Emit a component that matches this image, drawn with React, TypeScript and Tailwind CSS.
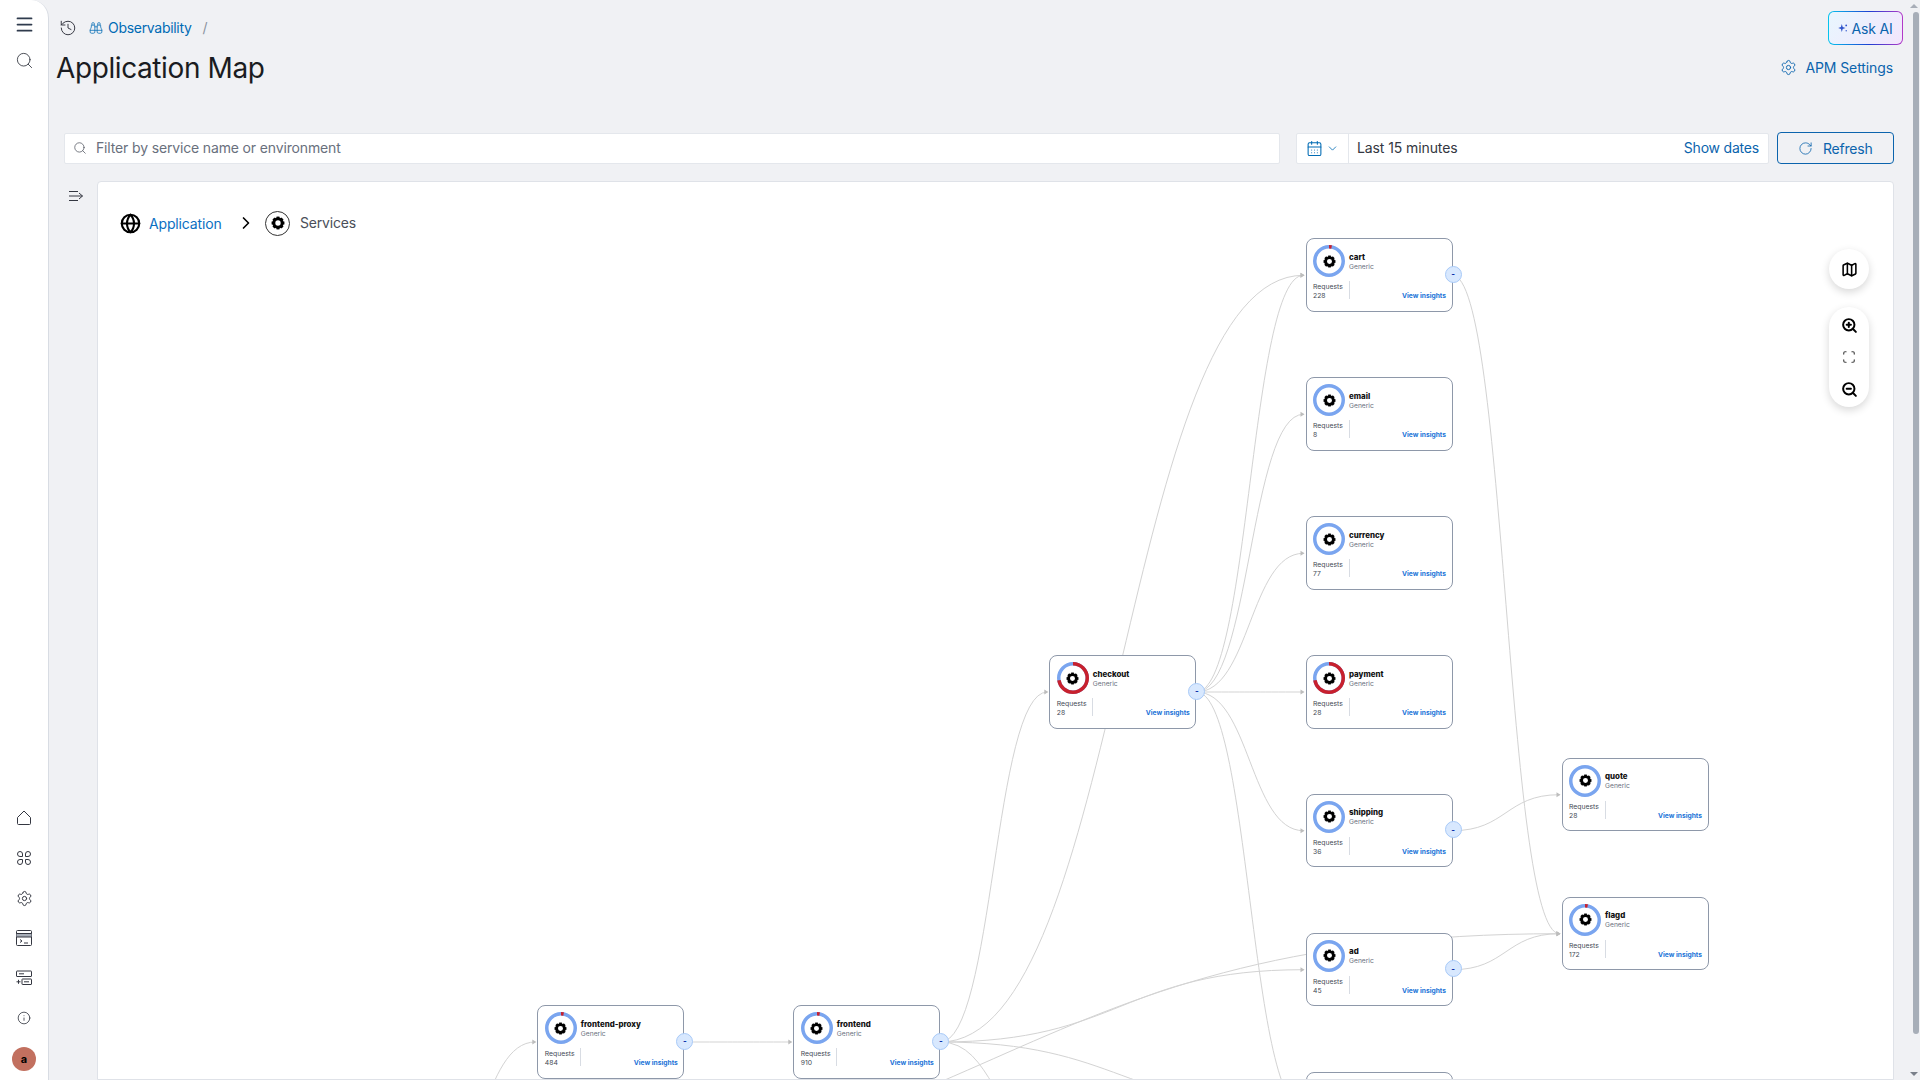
import { Binoculars, CalendarDays, ChevronDown, ChevronRight, Globe, History, Info, Map as MapIcon, Menu, RotateCw, Scan, Search, Settings, ZoomIn, ZoomOut } from "lucide-react";

const OX = 98;
const OY = 181.5;
const NODE_W = 147;
const NODE_H = 73;
const COLS = [537.3, 793.3, 1049.3, 1305.5, 1561.5];
const Y = { cart: 238.3, email: 377.3, currency: 516.3, pay: 655, ship: 793.7, ad: 932.7, last: 1071.7, quote: 757.7, flagd: 896.7, front: 1005 };

type NodeData = {
  name: string;
  requests: string;
  x: number;
  y: number;
  red: number;
  handle?: boolean;
};

const NODES: NodeData[] = [
  { name: "cart", requests: "228", x: COLS[3], y: Y.cart, red: 0.03, handle: true },
  { name: "email", requests: "8", x: COLS[3], y: Y.email, red: 0 },
  { name: "currency", requests: "77", x: COLS[3], y: Y.currency, red: 0 },
  { name: "payment", requests: "28", x: COLS[3], y: Y.pay, red: 0.72 },
  { name: "shipping", requests: "36", x: COLS[3], y: Y.ship, red: 0, handle: true },
  { name: "ad", requests: "45", x: COLS[3], y: Y.ad, red: 0, handle: true },
  { name: "", requests: "", x: COLS[3], y: Y.last, red: 0 },
  { name: "checkout", requests: "28", x: COLS[2], y: Y.pay, red: 0.72, handle: true },
  { name: "quote", requests: "28", x: COLS[4], y: Y.quote, red: 0 },
  { name: "flagd", requests: "172", x: COLS[4], y: Y.flagd, red: 0.03 },
  { name: "frontend-proxy", requests: "484", x: COLS[0], y: Y.front, red: 0.03, handle: true },
  { name: "frontend", requests: "910", x: COLS[1], y: Y.front, red: 0.03, handle: true },
];

const src = (n: number, y: number) => [COLS[n] + NODE_W, y + NODE_H / 2];
const dst = (n: number, y: number) => [COLS[n] - 2, y + NODE_H / 2];

const EDGES: number[][][] = [
  [[428, 1183], dst(0, Y.front)],
  [[428, 1183], dst(4, Y.flagd)],
  [src(0, Y.front), dst(1, Y.front)],
  [src(1, Y.front), dst(2, Y.pay)],
  [src(1, Y.front), dst(3, Y.cart)],
  [src(1, Y.front), dst(3, Y.ad)],
  [src(1, Y.front), dst(3, Y.last)],
  [src(1, Y.front), [1047, 1129]],
  [src(2, Y.pay), dst(3, Y.cart)],
  [src(2, Y.pay), dst(3, Y.email)],
  [src(2, Y.pay), dst(3, Y.currency)],
  [src(2, Y.pay), dst(3, Y.pay)],
  [src(2, Y.pay), dst(3, Y.ship)],
  [src(2, Y.pay), dst(3, Y.last)],
  [src(3, Y.cart), dst(4, Y.flagd)],
  [src(3, Y.ship), dst(4, Y.quote)],
  [src(3, Y.ad), dst(4, Y.flagd)],
];

function edgePath(a: number[], b: number[]) {
  const [x0, y0] = [a[0] - OX, a[1] - OY];
  const [x1, y1] = [b[0] - OX, b[1] - OY];
  const mx = (x0 + x1) / 2;
  return `M${x0},${y0} C${mx},${y0} ${mx},${y1} ${x1},${y1}`;
}

function Gear({ size }: { size: number }) {
  const teeth = [0, 45, 90, 135, 180, 225, 270, 315];
  return (
    <svg width={size} height={size} viewBox="0 0 24 24">
      {teeth.map((a) => (
        <rect key={a} x="9.5" y="1" width="5" height="5" fill="#000" transform={`rotate(${a} 12 12)`} />
      ))}
      <circle cx="12" cy="12" r="7.2" fill="none" stroke="#000" strokeWidth="5.2" />
    </svg>
  );
}

function Ring({ red }: { red: number }) {
  const r = 14.25;
  const c = 2 * Math.PI * r;
  return (
    <div className="relative w-8 h-8 shrink-0 flex items-center justify-center">
      <svg width="32" height="32" viewBox="0 0 32 32" className="absolute inset-0 -rotate-90">
        <circle cx="16" cy="16" r={r} fill="none" stroke="#7aa5ef" strokeWidth="3.5" />
        {red > 0 && (
          <circle cx="16" cy="16" r={r} fill="none" stroke="#c8202d" strokeWidth="3.5" strokeDasharray={`${red * c} ${c}`} />
        )}
      </svg>
      <Gear size={13} />
    </div>
  );
}

function Node({ node }: { node: NodeData }) {
  return (
    <div
      className="absolute w-[147px] h-[73.5px] bg-white border-[1.5px] border-[#8e98a9] rounded-[8px] pl-[6.5px] pr-[5.5px] pt-[6px] font-['Inter',sans-serif]"
      style={{ left: node.x - OX, top: node.y - OY }}
    >
      <div className="flex">
        <Ring red={node.red} />
        <div className="ml-[4px] pt-[7.5px] flex flex-col">
          <span className="h-[10px] leading-[9px] text-[7.9px] font-extrabold text-[#111] whitespace-nowrap">{node.name}</span>
          <span className="h-[9px] leading-[9px] text-[6.7px] text-[#69707d] whitespace-nowrap">{node.name ? "Generic" : ""}</span>
        </div>
      </div>
      <div className="flex mt-[4px] h-[20px]">
        <div className="w-[35.500px] pt-[1px] flex flex-col text-[6.8px] leading-[9px] text-[#444a55]">
          <span className="h-[9px]">{node.name ? "Requests" : ""}</span>
          <span className="h-[9px]">{node.requests}</span>
        </div>
        <div className="w-px h-[18px] bg-[#d8dce3]" />
        <div className="flex-1 flex items-end justify-end">
          <span className="text-[6.7px] leading-[9px] font-bold text-[#1a73d8] whitespace-nowrap">{node.name ? "View insights" : ""}</span>
        </div>
      </div>
      {node.handle && (
        <div className="absolute right-[-10px] top-[26.5px] w-[17px] h-[17px] rounded-full bg-[#d8e8fe] border border-[#a8caf8] flex items-center justify-center text-[8px] font-bold text-[#0a2fa8] leading-none">
          -
        </div>
      )}
    </div>
  );
}

function HomeGlyph() {
  return (
    <svg width="16" height="16" viewBox="0 0 16 16" fill="none" stroke="#343741" strokeWidth="1">
      <path d="M1.5 7.5 8 1l6.5 6.5v6a1 1 0 0 1-1 1h-11a1 1 0 0 1-1-1z" />
    </svg>
  );
}

function AppsGlyph() {
  return (
    <svg width="16" height="16" viewBox="0 0 16 16" fill="none" stroke="#343741" strokeWidth="1">
      <path d="M4 1.5a2.5 2.5 0 0 1 2.5 2.5v2.5H4a2.5 2.5 0 0 1 0-5z" />
      <path d="M12 1.5a2.5 2.5 0 0 0-2.5 2.5v2.5H12a2.5 2.5 0 0 0 0-5z" />
      <path d="M4 14.5A2.5 2.5 0 0 0 6.500 12V9.500H4a2.500 2.500 0 0 0 0 5z" />
      <path d="M12 14.500A2.500 2.500 0 0 1 9.500 12V9.500H12a2.500 2.500 0 0 1 0 5z" />
    </svg>
  );
}

function ConsoleGlyph() {
  return (
    <svg width="16" height="16" viewBox="0 0 16 16" fill="none" stroke="#343741" strokeWidth="1">
      <rect x="0.500" y="0.500" width="15" height="15" rx="1" />
      <rect x="0.500" y="3.500" width="15" height="3.500" fill="#a7adb7" stroke="none" />
      <path d="M0.500 3.500h15M0.500 7h15M4 9.500l2 1.500-2 1.500M8 13h4" />
    </svg>
  );
}

function AddGlyph() {
  return (
    <svg width="16" height="16" viewBox="0 0 16 16" fill="none" stroke="#343741" strokeWidth="1">
      <rect x="0.500" y="1" width="15" height="5.500" rx="0.500" />
      <path d="M3 3.800h5" />
      <rect x="6" y="9" width="9.500" height="5.500" rx="0.500" />
      <path d="M8 11.800h5M0.500 11.800h4M2.500 9.800v4" />
    </svg>
  );
}

function CollapseGlyph() {
  return (
    <svg width="16" height="12" viewBox="0 0 16 12" fill="none" stroke="#343741" strokeWidth="1">
      <path d="M1 1.500h9M1 6h13.500M1 10.500h9M11 3l3.500 3L11 9" />
    </svg>
  );
}

function Sparkle() {
  return (
    <svg width="10" height="10" viewBox="0 0 10 10" fill="#2f55cc">
      <path d="M3.800 1 4.700 4 7.500 5 4.700 6 3.800 9 2.900 6 0.200 5 2.900 4z" />
      <circle cx="8.200" cy="2.400" r="0.900" />
      <circle cx="8.200" cy="7.700" r="0.700" />
    </svg>
  );
}

function ScrollBar() {
  return (
    <div className="w-[12px] h-full shrink-0 flex flex-col items-center relative">
      <svg width="8" height="4" viewBox="0 0 8 4" className="mt-[4px] shrink-0">
        <path d="M0 4 4 0l4 4z" fill="#a8aeb8" />
      </svg>
      <div className="mt-[4px] w-[6px] h-[1022px] rounded-[3px] bg-[#a7aeb8] ml-[4px]" />
      <svg width="8" height="4" viewBox="0 0 8 4" className="mt-[38px] shrink-0">
        <path d="M0 0 4 4l4-4z" fill="#7a808a" />
      </svg>
    </div>
  );
}

export default function App() {
  return (
    <div className="flex w-full h-screen overflow-hidden bg-[#f0f1f4] font-['Inter',sans-serif]">
      <aside className="w-[49px] h-full shrink-0 bg-white border-r border-[#d8dce3] rounded-tr-[18px] flex flex-col justify-between items-center text-[#343741]">
        <div className="pt-[6px] flex flex-col items-center">
          <div className="h-9 flex items-center"><Menu size={21} strokeWidth={2} color="#2f3b4d" /></div>
          <div className="h-9 flex items-center"><Search size={19} strokeWidth={1.1} color="#343741" /></div>
        </div>
        <div className="pb-[1px] flex flex-col items-center">
          <div className="h-10 flex items-center"><HomeGlyph /></div>
          <div className="h-10 flex items-center"><AppsGlyph /></div>
          <div className="h-10 flex items-center"><Settings size={17} strokeWidth={1.4} color="#343741" /></div>
          <div className="h-10 flex items-center"><ConsoleGlyph /></div>
          <div className="h-10 flex items-center"><AddGlyph /></div>
          <div className="h-10 flex items-center"><Info size={14} strokeWidth={1.4} color="#343741" /></div>
          <div className="h-[41px] pt-[1px] flex items-center">
            <div className="w-6 h-6 rounded-full bg-[#c2705f] flex items-center justify-center text-[11px] font-bold text-black">a</div>
          </div>
        </div>
      </aside>

      <main className="flex-1 min-w-0 h-full flex flex-col">
        <div className="h-[45px] pt-[11px] pl-[10px] pr-[5.5px] flex justify-between items-start shrink-0">
          <div className="h-[33px] flex items-center">
            <History size={18} strokeWidth={1.3} color="#343741" />
            <Binoculars size={14} strokeWidth={1.3} color="#006bb4" className="ml-[12px]" />
            <span className="ml-[5px] text-[14px] tracking-[-0.3px] text-[#006bb4]">Observability</span>
            <span className="ml-[11px] text-[14px] text-[#8b93a0]">/</span>
          </div>
          <div className="p-px rounded-[6px] bg-[linear-gradient(90deg,#06c5ee,#1f3fd2_55%,#b43ac8)]">
            <div className="w-[73px] h-[32px] rounded-[5px] bg-[linear-gradient(135deg,#e8f6fe,#f3e6fc)] flex items-center justify-center gap-[4px] text-[14px] tracking-[-0.2px] text-[#0b64ad]">
              <Sparkle />
              Ask AI
            </div>
          </div>
        </div>

        <div className="h-[45px] pl-[7px] pr-[15px] flex justify-between items-center shrink-0">
          <h1 className="text-[28px] leading-[44px] font-normal tracking-[-0.4px] text-[#1a1c21]">Application Map</h1>
          <div className="flex items-center gap-[8px] text-[14px] tracking-[-0.1px] text-[#0b64ad]">
            <Settings size={17} strokeWidth={1.3} />
            APM Settings
          </div>
        </div>

        <div className="mt-[42px] h-[32px] pl-[15px] flex items-center shrink-0">
          <div className="w-[1216px] h-[31px] bg-white border border-[#e4e7ec] flex items-center pl-[8px] rounded-[2px]">
            <Search size={14} strokeWidth={1.25} color="#4a4f59" />
            <input
              className="ml-[9px] mb-[1px] flex-1 bg-transparent outline-none text-[14px] tracking-[-0.15px] text-[#343741] placeholder:text-[#69707d]"
              placeholder="Filter by service name or environment"
            />
          </div>
          <div className="ml-[16px] w-[473px] h-[31px] bg-white border border-[#e4e7ec] flex items-center rounded-[2px]">
            <div className="w-[52px] h-full border-r border-[#e4e7ec] flex items-center justify-center gap-[3px] text-[#006bb4]">
              <CalendarDays size={17} strokeWidth={1.5} />
              <ChevronDown size={13} strokeWidth={1.5} />
            </div>
            <span className="ml-[8px] mb-[1px] text-[14px] tracking-[-0.1px] text-[#343741]">Last 15 minutes</span>
            <span className="ml-auto mr-[9px] mb-[1px] text-[14px] tracking-[-0.2px] text-[#0b64ad]">Show dates</span>
          </div>
          <div className="ml-[7.5px] w-[117.5px] h-[32px] border border-[#0b64ad] rounded-[4px] flex items-center justify-center gap-[10px] text-[14px] tracking-[-0.2px] text-[#0b64ad]">
            <RotateCw size={15} strokeWidth={1.3} />
            Refresh
          </div>
        </div>

        <div className="mt-[16.5px] flex-1 min-h-0 flex pl-[19px] pr-[14.5px]">
          <div className="w-[29px] pt-[9px] shrink-0"><CollapseGlyph /></div>
          <div className="relative flex-1 min-w-0 bg-white border border-[#dfe2e8] rounded-t-[4px] overflow-hidden">
            <svg className="absolute inset-0 w-full h-full" fill="none">
              {EDGES.map((e, i) => (
                <path key={i} d={edgePath(e[0], e[1])} stroke="#d3d3d3" strokeWidth="1" />
              ))}
              {EDGES.map((e, i) => {
                const x = e[1][0] - OX;
                const y = e[1][1] - OY;
                return <path key={i} d={`M${x - 3},${y - 2.500} L${x + 1},${y} L${x - 3},${y + 2.500} Z`} fill="#bdbdbd" />;
              })}
            </svg>
            {NODES.map((n) => (
              <Node key={n.x + "-" + n.y} node={n} />
            ))}

            <div className="relative flex items-center pl-[22px] h-[83px]">
              <Globe size={21} strokeWidth={2.4} color="#000" />
              <span className="ml-[8px] text-[14px] tracking-[-0.15px] text-[#0b6fc2]">Application</span>
              <ChevronRight size={20} strokeWidth={2} color="#000" className="ml-[14px]" />
              <div className="ml-[9.500px] w-[25px] h-[25px] rounded-full border border-[#333] flex items-center justify-center">
                <Gear size={14} />
              </div>
              <span className="ml-[10px] mb-[1px] text-[14px] tracking-[-0.2px] text-[#4a4f59]">Services</span>
            </div>

            <div className="absolute left-[1731px] top-[67.5px] w-10 h-10 rounded-full bg-white shadow-[0_3px_8px_rgba(0,0,0,0.16)] flex items-center justify-center">
              <MapIcon size={17} strokeWidth={2.2} color="#000" />
            </div>
            <div className="absolute left-[1731px] top-[125.5px] w-10 h-[100px] rounded-full bg-white shadow-[0_3px_8px_rgba(0,0,0,0.16)] flex flex-col items-center justify-center gap-[15px]">
              <ZoomIn size={17} strokeWidth={2.8} color="#000" />
              <div className="h-[17px] flex items-center"><Scan size={14} strokeWidth={2} color="#444" /></div>
              <ZoomOut size={17} strokeWidth={2.8} color="#000" />
            </div>
          </div>
        </div>
      </main>

      <ScrollBar />
    </div>
  );
}
